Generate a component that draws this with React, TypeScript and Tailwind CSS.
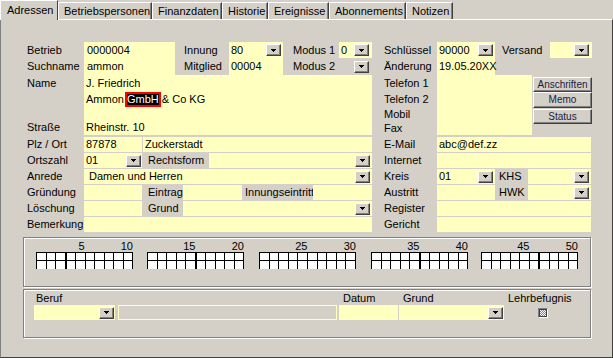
import React from "react";

const Arrow = () => (
  <svg width="5" height="3" viewBox="0 0 5 3" shapeRendering="crispEdges">
    <rect x="0" y="0" width="5" height="1" fill="#000" />
    <rect x="1" y="1" width="3" height="1" fill="#000" />
    <rect x="2" y="2" width="1" height="1" fill="#000" />
  </svg>
);

function Btn() {
  return (
    <div className="w-[15px] h-[12px] shrink-0 flex items-center justify-center bg-[#d4d0c8] border border-t-white border-l-white border-r-[#404040] border-b-[#404040] shadow-[inset_-1px_-1px_0_#808080]">
      <Arrow />
    </div>
  );
}

function CmdBtn({ label, cls }: { label: string; cls: string }) {
  return (
    <div
      className={
        "w-[59px] flex items-center justify-center bg-[#d4d0c8] border border-t-white border-l-white border-r-[#404040] border-b-[#404040] shadow-[inset_-1px_-1px_0_#808080] text-[10px] text-[#1a1a40] " +
        cls
      }
    >
      {label}
    </div>
  );
}

const tabs = [
  { t: "Betriebspersonen", w: "w-[94px]" },
  { t: "Finanzdaten", w: "w-[70px]" },
  { t: "Historie", w: "w-[46px]" },
  { t: "Ereignisse", w: "w-[61px]" },
  { t: "Abonnements", w: "w-[77px]" },
  { t: "Notizen", w: "w-[47px]" },
];

const gridGroups = [
  { a: "5", b: "10", dbl: 2, ml: "" },
  { a: "15", b: "20", dbl: 4, ml: "ml-[14px]" },
  { a: "25", b: "30", dbl: -1, ml: "ml-[15px]" },
  { a: "35", b: "40", dbl: 4, ml: "ml-[15px]" },
  { a: "45", b: "50", dbl: 5, ml: "ml-[13px]" },
];

function Cells({ dbl }: { dbl: number }) {
  const idx = [0, 1, 2, 3, 4, 5, 6, 7, 8, 9];
  return (
    <div className="w-[97px] border-t border-l border-black flex flex-col">
      <div className="flex h-[8px]">
        {idx.map((i) => (
          <div
            key={i}
            className={
              i === dbl
                ? "flex-1 bg-white border-b border-black border-r-2"
                : "flex-1 bg-white border-b border-r border-black"
            }
          />
        ))}
      </div>
      <div className="flex h-[8px]">
        {idx.map((i) => (
          <div
            key={i}
            className={i === dbl ? "flex-1 bg-white border-black border-r-2" : "flex-1 bg-white border-r border-black"}
          />
        ))}
      </div>
    </div>
  );
}

export default function App() {
  return (
    <div className="w-[613px] h-[358px] bg-[#d4d0c8] overflow-hidden font-['Liberation_Sans',Arial,sans-serif] text-[11px] text-black leading-none whitespace-nowrap">
      {/* Tabs */}
      <div className="flex items-end h-[19px] relative z-10">
        <div className="w-[58px] h-[20px] -mb-px bg-[#d4d0c8] border-t border-l border-r border-t-white border-l-white border-r-[#404040] pl-[6px] pt-[4px]">
          Adressen
        </div>
        {tabs.map((t) => (
          <div
            key={t.t}
            className={
              "h-[17px] flex items-center pl-[5px] border-t border-l border-r border-t-white border-l-white border-r-[#404040] shadow-[inset_-1px_0_0_#808080] " +
              t.w
            }
          >
            {t.t}
          </div>
        ))}
      </div>

      {/* Panel */}
      <div className="h-[339px] border-t border-l border-r border-b border-t-white border-l-[#808080] border-r-[#404040] border-b-[#404040] pt-[22px] pl-[22px]">
        <div className="flex ml-[4px]">
          {/* Left column */}
          <div className="w-[345px] flex flex-col">
            <div className="flex h-[33px]">
              <div className="w-[57px] flex flex-col">
                <div className="h-[16px] flex items-center">Betrieb</div>
                <div className="h-[17px] flex items-center">Suchname</div>
              </div>
              <div className="w-[91px] bg-[#ffffc0] flex flex-col pl-[3px]">
                <div className="h-[16px] flex items-center">0000004</div>
                <div className="h-[17px] flex items-center">ammon</div>
              </div>
              <div className="w-[54px] flex flex-col pl-[9px]">
                <div className="h-[16px] flex items-center">Innung</div>
                <div className="h-[17px] flex items-center">Mitglied</div>
              </div>
              <div className="w-[54px] bg-[#ffffc0] flex flex-col pl-[2px]">
                <div className="h-[16px] flex items-center justify-between pr-[2px]">
                  80
                  <Btn />
                </div>
                <div className="h-[17px] flex items-center">00004</div>
              </div>
              <div className="w-[56px] flex flex-col pl-[10px]">
                <div className="h-[16px] flex items-center">Modus 1</div>
                <div className="h-[17px] flex items-center">Modus 2</div>
              </div>
              <div className="w-[33px] flex flex-col">
                <div className="h-[16px] bg-[#ffffc0] flex items-center justify-between pl-[2px] pr-[3px]">
                  0
                  <Btn />
                </div>
                <div className="h-[17px] flex items-center justify-end pr-[3px]">
                  <Btn />
                </div>
              </div>
            </div>

            <div className="flex h-[44px]">
              <div className="w-[57px]">
                <div className="h-[16px] flex items-center">Name</div>
              </div>
              <div className="w-[288px] bg-[#ffffc0] flex flex-col pl-[2px]">
                <div className="h-[16px] flex items-center">J. Friedrich</div>
                <div className="h-[16px] flex items-center">
                  Ammon&nbsp;
                  <span className="inline-block h-[11px] leading-[11px] bg-black text-white outline-2 outline-[#ff0000]">GmbH</span>
                  &nbsp;&amp; Co KG
                </div>
              </div>
            </div>
            <div className="flex h-[16px]">
              <div className="w-[57px] flex items-center">Straße</div>
              <div className="w-[288px] bg-[#ffffc0] flex items-center pl-[2px]">Rheinstr. 10</div>
            </div>

            <div className="mt-[2px] flex flex-col gap-px">
              <div className="flex h-[15px]">
                <div className="w-[57px] flex items-center">Plz / Ort</div>
                <div className="w-[58px] bg-[#ffffc0] flex items-center pl-[2px]">87878</div>
                <div className="w-[229px] ml-px bg-[#ffffc0] flex items-center pl-[2px]">Zuckerstadt</div>
              </div>
              <div className="flex h-[15px]">
                <div className="w-[57px] flex items-center">Ortszahl</div>
                <div className="w-[58px] bg-[#ffffc0] flex items-center justify-between pl-[2px] pr-px">
                  01
                  <Btn />
                </div>
                <div className="w-[67px] flex items-center pl-[6px]">Rechtsform</div>
                <div className="w-[163px] bg-[#ffffc0] flex items-center justify-end pr-[2px]">
                  <Btn />
                </div>
              </div>
              <div className="flex h-[15px]">
                <div className="w-[57px] flex items-center">Anrede</div>
                <div className="w-[288px] bg-[#ffffc0] flex items-center justify-between pl-[5px] pr-[2px]">
                  Damen und Herren
                  <Btn />
                </div>
              </div>
              <div className="flex h-[15px]">
                <div className="w-[57px] flex items-center">Gründung</div>
                <div className="w-[58px] bg-[#ffffc0]" />
                <div className="w-[41px] flex items-center pl-[6px]">Eintrag</div>
                <div className="w-[59px] bg-[#ffffc0]" />
                <div className="w-[71px] flex items-center pl-[3px]">Innungseintritt</div>
                <div className="w-[59px] bg-[#ffffc0]" />
              </div>
              <div className="flex h-[15px]">
                <div className="w-[57px] flex items-center">Löschung</div>
                <div className="w-[58px] bg-[#ffffc0]" />
                <div className="w-[41px] flex items-center pl-[6px]">Grund</div>
                <div className="w-[189px] bg-[#ffffc0] flex items-center justify-end pr-[2px]">
                  <Btn />
                </div>
              </div>
              <div className="flex h-[15px]">
                <div className="w-[57px] flex items-center">Bemerkung</div>
                <div className="w-[288px] bg-[#ffffc0]" />
              </div>
            </div>
          </div>

          {/* Right column */}
          <div className="ml-[12px] w-[208px] flex flex-col">
            <div className="flex h-[33px]">
              <div className="w-[53px] flex flex-col">
                <div className="h-[16px] flex items-center">Schlüssel</div>
                <div className="h-[17px] flex items-center">Änderung</div>
              </div>
              <div className="w-[58px] bg-[#ffffc0] flex flex-col pl-[2px]">
                <div className="h-[16px] flex items-center justify-between pr-[2px]">
                  90000
                  <Btn />
                </div>
                <div className="h-[17px] flex items-center">19.05.20XX</div>
              </div>
              <div className="w-[55px] flex flex-col pl-[7px]">
                <div className="h-[16px] flex items-center">Versand</div>
              </div>
              <div className="w-[42px] flex flex-col">
                <div className="h-[16px] bg-[#ffffc0] flex items-center justify-end pr-[3px]">
                  <Btn />
                </div>
              </div>
            </div>

            <div className="flex h-[60px]">
              <div className="w-[53px] flex flex-col">
                <div className="h-[16px] flex items-center">Telefon 1</div>
                <div className="h-[16px] flex items-center">Telefon 2</div>
                <div className="h-[14px] flex items-center">Mobil</div>
                <div className="h-[14px] flex items-center">Fax</div>
              </div>
              <div className="w-[95px] bg-[#ffffc0]" />
              <div className="ml-px flex flex-col pt-[2px]">
                <CmdBtn label="Anschriften" cls="h-[15px]" />
                <CmdBtn label="Memo" cls="h-[16px]" />
                <CmdBtn label="Status" cls="h-[15px] mt-px" />
              </div>
            </div>

            <div className="mt-[2px] flex flex-col gap-px">
              <div className="flex h-[15px]">
                <div className="w-[53px] flex items-center">E-Mail</div>
                <div className="w-[154px] bg-[#ffffc0] flex items-center pl-[2px]">abc@def.zz</div>
              </div>
              <div className="flex h-[15px]">
                <div className="w-[53px] flex items-center">Internet</div>
                <div className="w-[154px] bg-[#ffffc0]" />
              </div>
              <div className="flex h-[15px]">
                <div className="w-[53px] flex items-center">Kreis</div>
                <div className="w-[58px] bg-[#ffffc0] flex items-center justify-between pl-[2px] pr-[2px]">
                  01
                  <Btn />
                </div>
                <div className="w-[33px] flex items-center pl-[4px]">KHS</div>
                <div className="w-[63px] bg-[#ffffc0] flex items-center justify-end pr-[2px]">
                  <Btn />
                </div>
              </div>
              <div className="flex h-[15px]">
                <div className="w-[53px] flex items-center">Austritt</div>
                <div className="w-[58px] bg-[#ffffc0]" />
                <div className="w-[33px] flex items-center pl-[4px]">HWK</div>
                <div className="w-[63px] bg-[#ffffc0] flex items-center justify-end pr-[2px]">
                  <Btn />
                </div>
              </div>
              <div className="flex h-[15px]">
                <div className="w-[53px] flex items-center">Register</div>
                <div className="w-[154px] bg-[#ffffc0]" />
              </div>
              <div className="flex h-[15px]">
                <div className="w-[53px] flex items-center">Gericht</div>
                <div className="w-[154px] bg-[#ffffc0]" />
              </div>
            </div>
          </div>
        </div>

        {/* Group box 1: grid */}
        <div className="mt-[5px] w-[568px] h-[50px] border border-[#808080] shadow-[inset_1px_1px_0_#fff,1px_1px_0_#fff] pt-[3px] pl-[12px] flex">
          {gridGroups.map((g) => (
            <div key={g.a} className={"w-[97px] flex flex-col " + g.ml}>
              <div className="h-[11px] flex leading-[11px]">
                <div className="w-1/2 text-right">{g.a}</div>
                <div className="w-1/2 text-right">{g.b}</div>
              </div>
              <Cells dbl={g.dbl} />
            </div>
          ))}
        </div>

        {/* Group box 2 */}
        <div className="mt-[2px] w-[568px] h-[49px] border border-[#808080] shadow-[inset_1px_1px_0_#fff,1px_1px_0_#fff] pt-[2px] pl-[10px] flex flex-col">
          <div className="flex h-[13px] items-center">
            <div className="w-[305px] pl-[2px]">Beruf</div>
            <div className="w-[60px] pl-[4px]">Datum</div>
            <div className="w-[105px] pl-[4px]">Grund</div>
            <div className="pl-[4px]">Lehrbefugnis</div>
          </div>
          <div className="flex h-[15px]">
            <div className="w-[81px] bg-[#ffffc0] flex items-center justify-end pr-px">
              <Btn />
            </div>
            <div className="ml-[3px] w-[219px] border border-[#ffffc0]" />
            <div className="ml-[2px] w-[59px] bg-[#ffffc0]" />
            <div className="ml-px w-[105px] bg-[#ffffc0] flex items-center justify-end pr-px">
              <Btn />
            </div>
            <div className="ml-[34px] pt-[3px]">
              <div className="w-[10px] h-[10px] border border-t-[#808080] border-l-[#808080] border-r-white border-b-white">
                <div className="w-full h-full border border-[#404040] bg-[repeating-conic-gradient(#808080_0%_25%,#ffffff_0%_50%)] bg-[length:2px_2px]" />
              </div>
            </div>
          </div>
        </div>
      </div>
    </div>
  );
}
